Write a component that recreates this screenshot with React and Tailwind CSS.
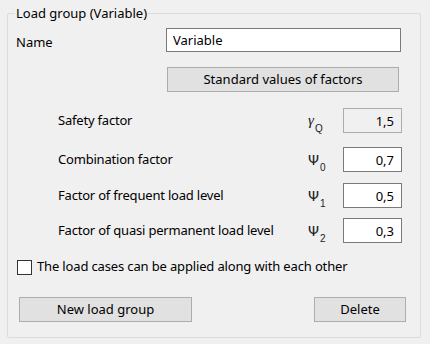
import React from 'react';

const FACTORS = [
    { label: 'Safety factor', sym: 'γ', sub: 'Q', value: '1,5', readOnly: true, mt: 'mt-[16px]' },
    { label: 'Combination factor', sym: 'Ψ', sub: '0', value: '0,7', mt: 'mt-[14px]' },
    { label: 'Factor of frequent load level', sym: 'Ψ', sub: '1', value: '0,5', mt: 'mt-[11px]' },
    { label: 'Factor of quasi permanent load level', sym: 'Ψ', sub: '2', value: '0,3', mt: 'mt-[10px]' },
];

export default function App() {
    return (
        <div
            className="w-[430px] h-[344px] bg-[#f0f0f0] pt-[13px] pl-[7px] text-[13px] text-black"
            style={{ fontFamily: '"Noto Sans", "Liberation Sans", sans-serif' }}
        >
            {/* Group box */}
            <div className="relative w-[414px] h-[325px] border border-[#dcdcdc] rounded-[2px] flex flex-col">
                <span className="absolute -top-[10px] left-[7px] px-[1px] bg-[#f0f0f0] leading-[18px]">
                    Load group (Variable)
                </span>

                {/* Name */}
                <div className="mt-[14px] h-[24px] flex items-center">
                    <span className="w-[158px] pl-[8px] pt-[5px]">Name</span>
                    <input
                        defaultValue="Variable"
                        className="w-[235px] h-[24px] bg-white border border-[#7a7a7a] px-[6px] outline-none"
                    />
                </div>

                <button className="mt-[15px] ml-[159px] w-[232px] h-[25px] bg-[#e1e1e1] border border-[#adadad]">
                    Standard values of factors
                </button>

                {/* Factors */}
                {FACTORS.map((f) => (
                    <div key={f.label} className={`${f.mt} h-[25px] flex items-center`}>
                        <span className="w-[300px] pl-[50px] whitespace-nowrap tracking-[-0.2px]">{f.label}</span>
                        <span
                            className="w-[35px] text-[14px] leading-none text-[#222]"
                            style={{ fontFamily: '"DejaVu Sans", sans-serif' }}
                        >
                            {f.sym === 'γ' ? <i style={{ fontFamily: '"Liberation Serif", serif', fontSize: '15px' }}>{f.sym}</i> : f.sym}
                            <sub className="text-[10px] align-[-4px] ml-[1px]" style={{ fontFamily: '"Liberation Sans", sans-serif' }}>
                                {f.sub}
                            </sub>
                        </span>
                        <input
                            readOnly={f.readOnly}
                            defaultValue={f.value}
                            className={`w-[59px] h-[25px] border text-right pl-[5px] pr-[7px] outline-none text-[13px] ${
                                f.readOnly ? 'bg-[#f0f0f0] border-[#adadad]' : 'bg-white border-[#7a7a7a]'
                            }`}
                        />
                    </div>
                ))}

                {/* Checkbox */}
                <label className="mt-[16px] h-[16px] flex items-center pl-[9px]">
                    <span className="w-[15px] h-[15px] border border-[#333] bg-white" />
                    <span className="ml-[5px] tracking-[-0.15px]">The load cases can be applied along with each other</span>
                </label>

                {/* Buttons */}
                <div className="mt-[22px] flex justify-between pl-[11px] pr-[14px]">
                    <button className="w-[173px] h-[25px] bg-[#e1e1e1] border border-[#adadad]">
                        New load group
                    </button>
                    <button className="w-[92px] h-[25px] bg-[#e1e1e1] border border-[#adadad]">
                        Delete
                    </button>
                </div>
            </div>
        </div>
    );
}
